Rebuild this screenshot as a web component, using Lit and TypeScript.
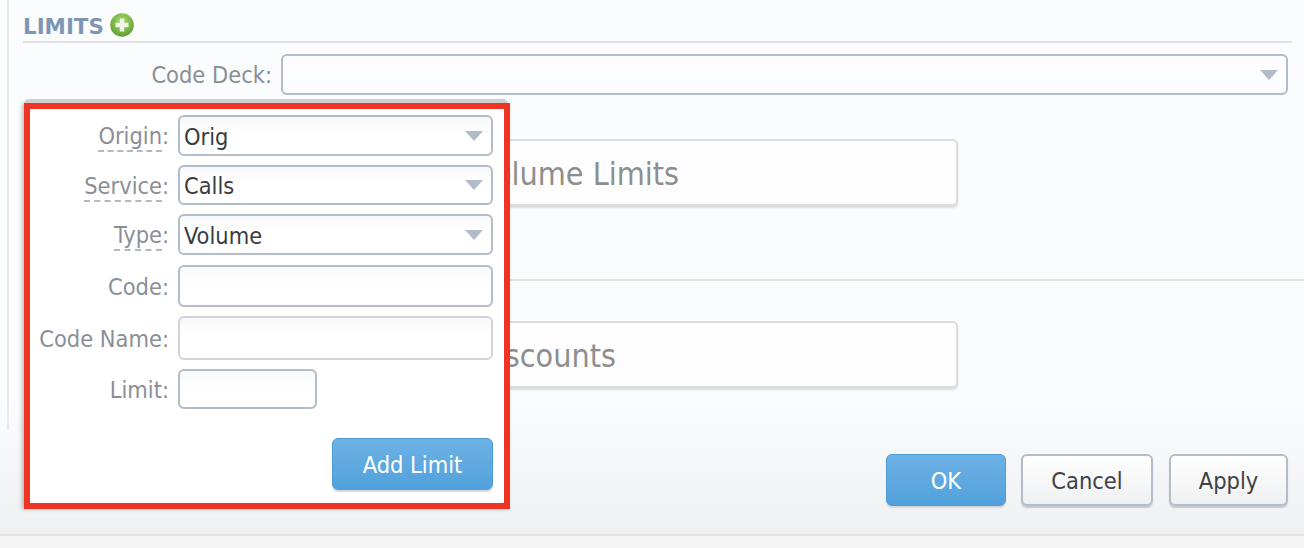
import { LitElement, html, css } from "lit";
import { customElement } from "lit/decorators.js";

const arrow = html`<svg class="arrow" width="18" height="10" viewBox="0 0 18 10"><path d="M0 0H18L9 10Z" fill="#b2bbc8"/></svg>`;

@customElement("app-root")
export class AppRoot extends LitElement {
  static styles = css`
    :host { display: block; width: 1304px; height: 548px; overflow: hidden; position: relative; background: #f5f5f6;
      font-family: "DejaVu Sans Condensed", "DejaVu Sans", "Noto Sans", sans-serif; font-size: 23.4px; color: #8a8f97; }
    * { box-sizing: border-box; }
    .page { height: 536px; background: linear-gradient(#fbfcfe 0, #fbfcfe 400px, #eff0f2 534px); display: flex; flex-direction: column; border-bottom: 2px solid #e4e5e7; }
    .rail { position: absolute; left: 7px; top: 0; width: 2px; height: 430px; background: #e6ebf2; }
    .limits { margin: 13px 12px 0 23px; height: 30px; border-bottom: 2px solid #dfe1e6; display: flex; align-items: flex-start; gap: 6px; }
    .limits h2 { margin: 0; padding-top: 1px; font-family: "DejaVu Sans", sans-serif; font-weight: 700; font-size: 21.4px; line-height: 26px; color: #7f95b4; }
    .deck { display: flex; align-items: center; margin: 11px 16px 0 0; justify-content: flex-end; gap: 9px; }
    .deck label { line-height: 40px; padding-top: 1px; }
    .deck .field { width: 1007px; }
    .field { height: 40px; border: 2px solid #b2bbc8; border-radius: 6px; background: linear-gradient(#f8f8f9, #fff 45%); display: flex; align-items: center; justify-content: space-between; padding: 0 8px 0 4px; color: #3a3c40; }
    .field span { padding-top: 2px; }
    .deck .field { height: 41px; background: #fcfdfe; }
    .arrow { flex: none; }
    .card { width: 677px; height: 67px; margin-left: 281px; border: 2px solid #dcdcdc; border-radius: 5px; background: #fdfdfe; box-shadow: 0 2px 2px #dcdcdc; font-size: 32px; color: #8e8e8e; display: flex; align-items: center; justify-content: flex-end; }
    .c1 { margin-top: 44px; padding: 2px 277px 0 0; }
    .c2 { padding: 2px 340px 0 0; }
    .sep { height: 2px; background: #e0e2e6; margin: 73px 0 40px 100px; }
    .actions { display: flex; justify-content: flex-end; gap: 16px; margin: 66px 16px 0 0; }
    button { font: inherit; height: 52px; border-radius: 6px; padding: 2px 0 0; display: block; }
    .primary { background: linear-gradient(#6db2e5, #52a1dc); border: 1px solid #4e9bd6; color: #fff; box-shadow: 0 2px 1px #d5d8dc; }
    .plain { background: linear-gradient(#fff, #eff0f2); border: 2px solid #b4bcc8; color: #3f4144; box-shadow: 0 2px 1px #c4c9d0; }
    .ok { width: 120px; margin-right: -1px; } .cancel { width: 132px; } .apply { width: 119px; }
    .popup { position: absolute; left: 24px; top: 103px; width: 486px; height: 406px; box-shadow: -2px 0 4px rgba(0,0,0,.25); }
    .popup::before { content: ""; position: absolute; left: 0; right: 2px; top: -4px; height: 6px; background: #cfcfcf; border-radius: 5px 5px 0 0; }
    .frame { position: relative; height: 100%; background: #fff; border: 6px solid #ef3325; padding: 6px 11px 0 0; display: flex; flex-direction: column; }
    .row { display: flex; align-items: center; gap: 9px; }
    .row > label { width: 139px; text-align: right; flex: none; padding-top: 1px; }
    .row > .lab { width: 139px; text-align: right; flex: none; padding-top: 3px; }
    .dash { border-bottom: 2px dashed #b4b9c0; line-height: 27px; display: inline-block; position: relative; margin-right: 7px; }
    .dash::after { content: ":"; position: absolute; left: 100%; }
    .row .field { flex: 1; height: 100%; }
    .r1 { height: 41px; } .r2 { height: 40px; margin-top: 9px; } .r3 { height: 41px; margin-top: 9px; }
    .r4 { height: 42px; margin-top: 10px; } .r5 { height: 44px; margin-top: 9px; } .r6 { height: 40px; margin-top: 9px; }
    .r5 .field { border-color: #d0d5dc; }
    .r6 .field { flex: none; width: 139px; }
    .add { width: 161px; margin: 29px 0 0 auto; }
  `;

  private select(v: string) {
    return html`<div class="field"><span>${v}</span>${arrow}</div>`;
  }

  render() {
    return html`
      <div class="page">
        <div class="limits">
          <h2>LIMITS</h2>
          <svg width="24" height="24" viewBox="0 0 24 24">
            <defs><radialGradient id="g" cx="50%" cy="35%" r="65%"><stop offset="0" stop-color="#a8d86e"/><stop offset="1" stop-color="#5f9f30"/></radialGradient></defs>
            <circle cx="12" cy="12" r="11.8" fill="url(#g)"/>
            <path d="M12 5.500v13M5.500 12h13" stroke="#eef6e4" stroke-width="4.500"/>
          </svg>
        </div>
        <div class="deck"><label>Code Deck:</label><div class="field"><span></span>${arrow}</div></div>
        <div class="card c1">Add Volume Limits</div>
        <div class="sep"></div>
        <div class="card c2">Add Discounts</div>
        <div class="actions">
          <button class="primary ok">OK</button>
          <button class="plain cancel">Cancel</button>
          <button class="plain apply">Apply</button>
        </div>
      </div>
      <div class="rail"></div>
      <div class="popup"><div class="frame">
        <div class="row r1"><div class="lab"><span class="dash">Origin</span></div>${this.select("Orig")}</div>
        <div class="row r2"><div class="lab"><span class="dash">Service</span></div>${this.select("Calls")}</div>
        <div class="row r3"><div class="lab"><span class="dash">Type</span></div>${this.select("Volume")}</div>
        <div class="row r4"><label>Code:</label><div class="field"></div></div>
        <div class="row r5"><label>Code Name:</label><div class="field"></div></div>
        <div class="row r6"><label>Limit:</label><div class="field"></div></div>
        <button class="primary add">Add Limit</button>
      </div></div>
    `;
  }
}
